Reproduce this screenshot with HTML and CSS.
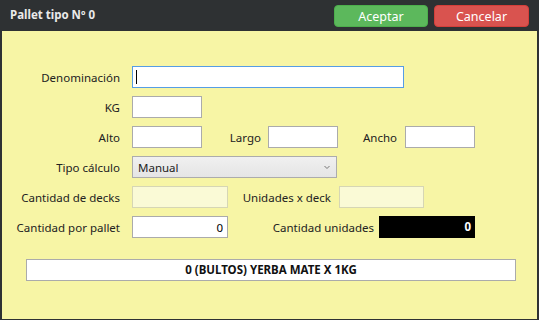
FILE: index.html
```html
<!DOCTYPE html>
<html lang="es">
<head>
    <meta charset="UTF-8">
    <title>Pallet tipo</title>
    <link rel="stylesheet" href="styles.css">
</head>
<body>

<div class="dialog">
    <div class="titlebar">
        <h1>Pallet tipo Nº 0</h1>
        <div class="actions">
            <button class="btn btn-ok">Aceptar</button>
            <button class="btn btn-cancel">Cancelar</button>
        </div>
    </div>

    <div class="content">
        <div class="row">
            <label class="lbl">Denominación</label>
            <div class="field field-wide focused"><span class="caret"></span></div>
        </div>
        <div class="row">
            <label class="lbl">KG</label>
            <input type="text" class="field field-sm">
        </div>
        <div class="row">
            <label class="lbl">Alto</label>
            <input type="text" class="field field-sm">
            <label class="lbl2 w-largo">Largo</label>
            <input type="text" class="field field-sm">
            <label class="lbl2 w-ancho">Ancho</label>
            <input type="text" class="field field-sm">
        </div>
        <div class="row">
            <label class="lbl">Tipo cálculo</label>
            <div class="select">
                <span>Manual</span>
                <svg width="6" height="5" viewBox="0 0 6 5"><path d="M0.5 1 L3 3.5 L5.5 1" fill="none" stroke="#777" stroke-width="1"/></svg>
            </div>
        </div>
        <div class="row">
            <label class="lbl">Cantidad de decks</label>
            <input type="text" class="field field-md" disabled>
            <label class="lbl2 w-decks">Unidades x deck</label>
            <input type="text" class="field field-deck" disabled>
        </div>
        <div class="row">
            <label class="lbl">Cantidad por pallet</label>
            <input type="text" class="field field-md num" value="0">
            <label class="lbl2 w-unid">Cantidad unidades</label>
            <div class="total">0</div>
        </div>

        <div class="summary">0 (BULTOS) YERBA MATE X 1KG</div>
    </div>
</div>

</body>
</html>
```

FILE: styles.css
```css
* {
    margin: 0;
    padding: 0;
    box-sizing: border-box;
}

body {
    font-family: "Segoe UI", "Noto Sans", sans-serif;
    font-size: 11.5px;
    background-color: #2e3133;
    color: #222;
    width: 539px;
    height: 320px;
    overflow: hidden;
}

.dialog {
    height: 320px;
    display: flex;
    flex-direction: column;
}

.titlebar {
    height: 31px;
    display: flex;
    align-items: center;
    justify-content: space-between;
    padding: 0 10px 0 10px;
    color: #eaeaea;
}

.titlebar h1 {
    font-size: 11.5px;
    font-weight: 700;
    margin-top: -2px;
}

.actions {
    display: flex;
    gap: 6px;
    margin-top: 1px;
}

.btn {
    font-family: inherit;
    font-size: 12.5px;
    color: #fff;
    height: 22px;
    border-radius: 4px;
    cursor: pointer;
}

.btn-ok {
    width: 94px;
    background-color: #5cb85c;
    border: 1px solid #4cae4c;
}

.btn-cancel {
    width: 95px;
    background-color: #d9534f;
    border: 1px solid #d43f3a;
}

.content {
    flex: 1;
    margin: 0 2px 1px 2px;
    background-color: #f7f5a5;
    padding-top: 35px;
    display: flex;
    flex-direction: column;
    gap: 8px;
}

.row {
    display: flex;
    align-items: center;
    height: 22px;
}

.lbl {
    width: 118px;
    margin-right: 12px;
    text-align: right;
}

.lbl2 {
    text-align: right;
}

.w-largo {
    width: 59px;
    margin-right: 7px;
}

.w-ancho {
    width: 59px;
    margin-right: 8px;
}

.w-decks {
    width: 103px;
    margin-right: 8px;
}

.w-unid {
    width: 146px;
    margin-right: 5px;
}

.field {
    height: 22px;
    border: 1px solid #ababab;
    background-color: #fff;
    font-family: inherit;
    font-size: 11.5px;
    padding: 0 4px;
    outline: none;
}

.field.focused {
    border-color: #569de5;
    display: flex;
    align-items: center;
    padding-left: 3px;
}

.caret {
    width: 1px;
    height: 14px;
    background-color: #000;
}

.field:disabled {
    background-color: #fafad6;
    border-color: #d6d6b4;
}

.field-wide {
    width: 272px;
}

.field-sm {
    width: 70px;
}

.field-md {
    width: 96px;
}

.field-deck {
    width: 85px;
}

.num {
    text-align: right;
}

.select {
    width: 205px;
    height: 22px;
    border: 1px solid #acacac;
    background: linear-gradient(#f0f0f0, #e5e5e5);
    display: flex;
    align-items: center;
    justify-content: space-between;
    padding: 0 6px 0 5px;
}

.total {
    width: 96px;
    height: 22px;
    background-color: #000;
    color: #fff;
    font-weight: 700;
    text-align: right;
    line-height: 22px;
    padding-right: 4px;
}

.summary {
    margin: 13px 21px 0 24px;
    height: 22px;
    line-height: 20px;
    border: 1px solid #ababab;
    background-color: #fff;
    text-align: center;
    font-weight: 700;
    color: #111;
}
```
